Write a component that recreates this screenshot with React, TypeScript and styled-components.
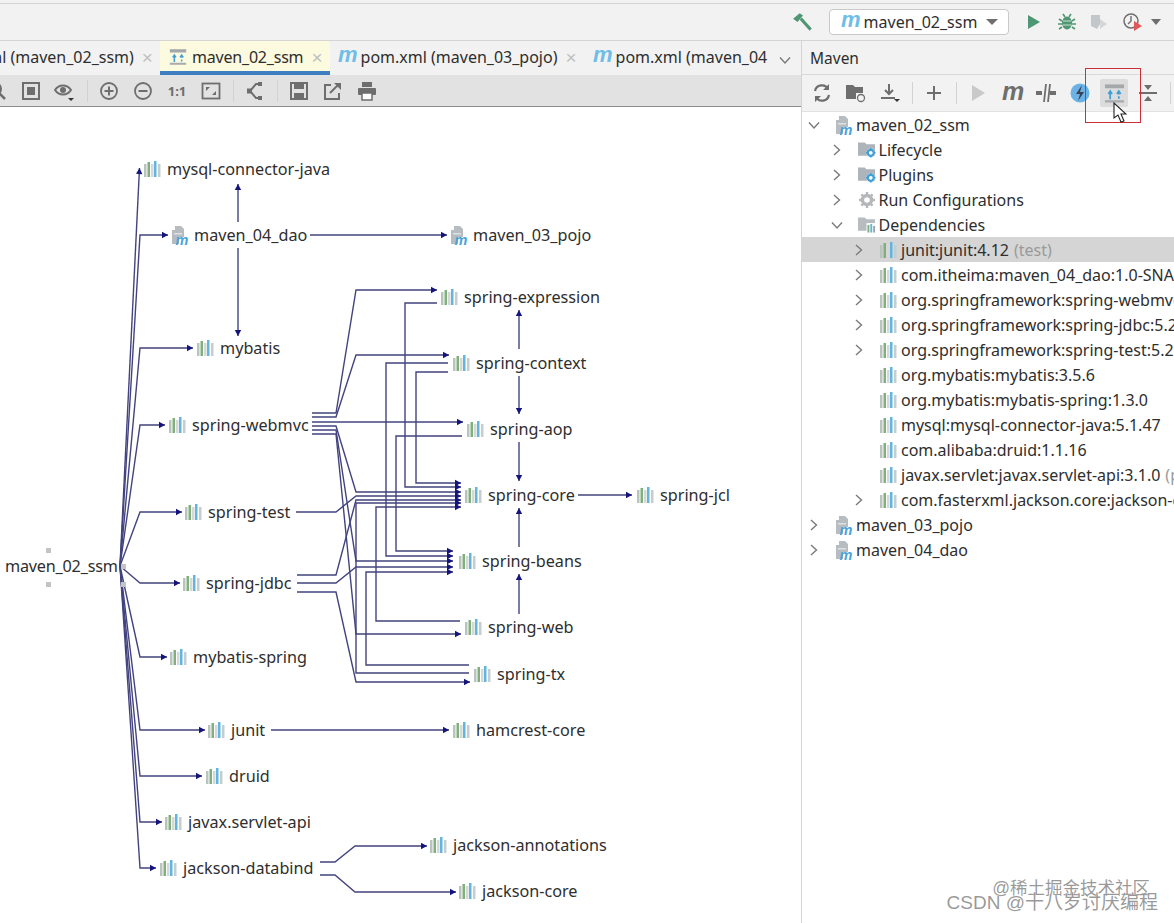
import React, { FunctionComponent } from 'react';
import styled, { createGlobalStyle } from 'styled-components';

const UI_FONT = '"Noto Sans", "Open Sans", "Liberation Sans", sans-serif';
const GRAPH_TOP = 107;

const GlobalStyle = createGlobalStyle`
  html, body { margin: 0; padding: 0; background: #fff; }
  body { font-family: ${UI_FONT}; color: #2e2e2e; }
`;

/* ---------- small drawn icons ---------- */

const Bars: FunctionComponent = () => (
  <svg width="18" height="16" viewBox="0 0 18 16">
    <rect x="0" y="3" width="2.5" height="13" fill="#b9c4bf" />
    <rect x="3.5" y="1" width="2.5" height="15" fill="#7fb07c" />
    <rect x="7" y="3" width="2.5" height="13" fill="#d4d8d6" />
    <rect x="10" y="0" width="2.5" height="16" fill="#62b5e0" />
    <rect x="14" y="3" width="2.5" height="13" fill="#c4cdd0" />
  </svg>
);

const ProjectIcon: FunctionComponent = () => (
  <svg width="18" height="20" viewBox="0 0 18 20">
    <path d="M1 5h3V1h6l3 3v8H8v7H1z" fill="#b7bcc0" />
    <rect x="3" y="8" width="8" height="1.500" fill="#dfe2e4" />
    <text x="4.500" y="19.500" fontFamily="Liberation Sans" fontSize="14.500" fontWeight="700" fontStyle="italic" fill="#4aa3d8">
      m
    </text>
  </svg>
);

const FolderGear: FunctionComponent = () => (
  <svg width="19" height="19" viewBox="0 0 19 19">
    <path d="M0 2h7l2 2h9v12H0z" fill="#aeb4b9" />
    <circle cx="13.5" cy="13" r="4.6" fill="#fff" />
    <circle cx="13.5" cy="13" r="3.2" fill="none" stroke="#3f9fd6" strokeWidth="2.4" />
    <path d="M13.5 8v2M13.5 16v2M8.5 13h2M16.5 13h2" stroke="#3f9fd6" strokeWidth="1.6" />
  </svg>
);

const Gear: FunctionComponent = () => (
  <svg width="18" height="18" viewBox="0 0 18 18">
    <circle cx="9" cy="9" r="4.5" fill="none" stroke="#b4b8bb" strokeWidth="3.4" />
    <path
      d="M9 1v3M9 14v3M1 9h3M14 9h3M3.4 3.4l2 2M12.6 12.6l2 2M14.6 3.4l-2 2M5.400 12.600l-2 2"
      stroke="#b4b8bb"
      strokeWidth="2.4"
    />
  </svg>
);

const FolderBars: FunctionComponent = () => (
  <svg width="19" height="19" viewBox="0 0 19 19">
    <path d="M0 2h7l2 2h9v12H0z" fill="#b7bcc0" />
    <rect x="9" y="8" width="10" height="10" fill="#fff" />
    <rect x="10" y="10" width="2" height="8" fill="#7fb07c" />
    <rect x="13" y="9" width="2" height="9" fill="#62b5e0" />
    <rect x="16" y="11" width="2" height="7" fill="#9aa4a8" />
  </svg>
);

const ChevronRight: FunctionComponent = () => (
  <svg width="14" height="14" viewBox="0 0 14 14">
    <path d="M4 2l5.500 5-5.500 5" fill="none" stroke="#7a7a7a" strokeWidth="1.4" />
  </svg>
);

const ChevronDown: FunctionComponent = () => (
  <svg width="14" height="14" viewBox="0 0 14 14">
    <path d="M2 4.500l5 5.500 5-5.500" fill="none" stroke="#7a7a7a" strokeWidth="1.4" />
  </svg>
);

const Glyph: FunctionComponent<{ children: React.ReactNode; size?: number }> = ({ children, size = 22 }) => (
  <svg width={size} height={size} viewBox="0 0 22 22">
    {children}
  </svg>
);

const GRAY = '#6e6e6e';

const SplitIcon: FunctionComponent<{ size: number }> = ({ size }) => (
  <Glyph size={size}>
    <rect x="1" y="1.500" width="20" height="4" fill="#a4a8ab" />
    <rect x="1" y="18" width="20" height="2.500" fill="#a9adb0" />
    <path d="M6.500 17V9.500M4.500 11.500l2-3 2 3" fill="none" stroke="#3f9fd6" strokeWidth="1.800" />
    <path d="M15.500 12V9.500M13.500 11.500l2-3 2 3M15.500 14v2.500" fill="none" stroke="#3f9fd6" strokeWidth="1.800" />
  </Glyph>
);

/* ---------- page frame ---------- */

const Page = styled.div`
  width: 1174px;
  height: 923px;
  overflow: hidden;
  position: relative;
  display: flex;
  flex-direction: column;
  background: #fff;
`;

const TopEdge = styled.div`
  height: 3px;
  flex: none;
  background: #f2f2f2;
  border-bottom: 1px solid #d4d4d4;
`;

const TopBar = styled.div`
  height: 36px;
  flex: none;
  display: flex;
  align-items: center;
  justify-content: flex-end;
  padding-right: 11px;
  background: #f2f2f2;
  border-bottom: 1px solid #d4d4d4;
`;

const TopSlot = styled.div<{ $w?: number }>`
  width: ${p => p.$w || 33}px;
  height: 26px;
  display: flex;
  align-items: center;
  justify-content: center;
`;

const RunConfig = styled.div`
  width: 180px;
  height: 26px;
  box-sizing: border-box;
  margin: 0 8px 0 10px;
  padding-left: 11px;
  display: flex;
  align-items: center;
  gap: 5px;
  background: #fff;
  border: 1px solid #c9c9c9;
  border-radius: 4px;
  font-size: 16px;
`;

const MavenM = styled.span<{ $color?: string; $size?: number }>`
  font-family: 'Liberation Sans', sans-serif;
  font-style: italic;
  font-weight: 700;
  font-size: ${p => p.$size || 22}px;
  line-height: 1;
  color: ${p => p.$color || '#6fbde8'};
  margin: -4px -2px 0 0;
`;

const ProjectName = styled.span`
  letter-spacing: -0.2px;
`;

const Caret = styled.span`
  width: 0;
  height: 0;
  margin-left: auto;
  margin-right: 10px;
  border-left: 6px solid transparent;
  border-right: 6px solid transparent;
  border-top: 6px solid #6e6e6e;
`;

const Body = styled.div`
  flex: 1;
  min-height: 0;
  display: flex;
`;

const EditorColumn = styled.div`
  width: 801px;
  flex: none;
  display: flex;
  flex-direction: column;
  overflow: hidden;
`;

/* ---------- editor tabs ---------- */

const TabStrip = styled.div`
  height: 34px;
  flex: none;
  display: flex;
  align-items: stretch;
  background: #f2f2f2;
  font-size: 16px;
  white-space: nowrap;
  position: relative;
`;

const Tab = styled.div<{ $active?: boolean; $w: number }>`
  width: ${p => p.$w}px;
  flex: none;
  box-sizing: border-box;
  display: flex;
  align-items: center;
  gap: 5px;
  padding: 2px 0 0 ${p => (p.$active ? 9 : 8)}px;
  background: ${p => (p.$active ? '#fcfadf' : 'transparent')};
  border-bottom: 4px solid ${p => (p.$active ? '#3f7fc1' : 'transparent')};
`;

const ClippedTab = styled(Tab)`
  margin-left: -60px;
  padding-left: 0;
`;

const TabClose = styled.span`
  color: #c0c0c0;
  font-size: 19px;
  font-family: 'Liberation Sans', sans-serif;
  line-height: 1;
  margin-left: 3px;
`;

const TabsMenu = styled.div`
  position: absolute;
  right: 9px;
  top: 9px;
`;

const GraphToolbar = styled.div`
  height: 31px;
  flex: none;
  display: flex;
  align-items: center;
  background: #e2e2e2;
  border-bottom: 1px solid #8c8c8c;
`;

const Slot = styled.div`
  width: 34px;
  height: 28px;
  flex: none;
  display: flex;
  align-items: center;
  justify-content: center;
`;

const FirstSlot = styled(Slot)`
  margin-left: -20px;
`;

const Sep = styled.div`
  width: 10px;
  flex: none;
  height: 22px;
  display: flex;
  justify-content: center;
  &::before {
    content: '';
    width: 1px;
    background: #d2d2d2;
  }
`;

const OneToOne = styled.span`
  font-size: 13px;
  font-weight: 700;
  color: #6e6e6e;
`;

/* ---------- dependency graph ---------- */

const Canvas = styled.div`
  flex: 1;
  position: relative;
  background: #fff;
  overflow: hidden;
`;

const EdgeLayer = styled.svg`
  position: absolute;
  left: 0;
  top: 0;
`;

const GraphNode = styled.div<{ $x: number; $y: number }>`
  position: absolute;
  left: ${p => p.$x}px;
  top: ${p => p.$y - GRAPH_TOP - 12}px;
  height: 24px;
  display: flex;
  align-items: center;
  gap: 5px;
  font-size: 16.2px;
  white-space: nowrap;
`;

const Handle = styled.span<{ $x: number; $y: number }>`
  position: absolute;
  left: ${p => p.$x}px;
  top: ${p => p.$y - GRAPH_TOP}px;
  width: 5px;
  height: 5px;
  background: #c4c4c4;
`;

/* ---------- maven tool window ---------- */

const MavenPanel = styled.div`
  flex: 1;
  min-width: 0;
  border-left: 1px solid #d4d4d4;
  display: flex;
  flex-direction: column;
  overflow: hidden;
`;

const PanelTitle = styled.div`
  height: 33px;
  flex: none;
  display: flex;
  align-items: center;
  padding-left: 8px;
  font-size: 15.5px;
  background: #f2f2f2;
  border-bottom: 1px solid #d9d9d9;
`;

const PanelToolbar = styled.div`
  height: 36px;
  flex: none;
  display: flex;
  align-items: center;
  padding-left: 3px;
  background: #f2f2f2;
  border-bottom: 1px solid #e2e2e2;
`;

const HoverSlot = styled(Slot)`
  &::before {
    content: '';
    position: absolute;
    width: 28px;
    height: 28px;
    background: #dcdcdc;
    border-radius: 2px;
  }
  & > svg {
    position: relative;
  }
`;

const Tree = styled.div`
  flex: 1;
  background: #fff;
`;

const Row = styled.div<{ $level: number; $selected?: boolean }>`
  height: 25px;
  display: flex;
  align-items: center;
  padding-left: ${p => 5 + p.$level * 22.5}px;
  background: ${p => (p.$selected ? '#d5d5d5' : 'transparent')};
  font-size: 16px;
  white-space: nowrap;
`;

const Twist = styled.span`
  width: 14px;
  height: 14px;
  flex: none;
  display: flex;
  margin-right: 14px;
`;

const RowIcon = styled.span`
  width: 18px;
  flex: none;
  margin-right: 3px;
  display: flex;
  align-items: center;
`;

const Muted = styled.span`
  color: #9a9a9a;
  margin-left: 5px;
`;

/* ---------- overlays ---------- */

const RedBox = styled.div`
  position: absolute;
  left: 1085px;
  top: 68px;
  width: 56px;
  height: 55px;
  box-sizing: border-box;
  border: 1px solid #c8303a;
  pointer-events: none;
`;

const Pointer = styled.svg`
  position: absolute;
  left: 1113px;
  top: 102px;
`;

const Watermark = styled.div<{ $top: number; $right: number; $size: number }>`
  position: absolute;
  top: ${p => p.$top}px;
  right: ${p => p.$right}px;
  font-family: 'Liberation Sans', 'Noto Sans CJK SC', sans-serif;
  font-size: ${p => p.$size}px;
  line-height: 1.2;
  color: rgba(120, 120, 120, 0.75);
  text-shadow: 0 0 1px rgba(255, 255, 255, 0.9);
  white-space: nowrap;
`;

/* ---------- data ---------- */

const nodes: [string, number, number][] = [
  ['mysql-connector-java', 144, 169],
  ['maven_04_dao', 171, 235],
  ['maven_03_pojo', 450, 235],
  ['mybatis', 197, 348],
  ['spring-webmvc', 169, 425],
  ['spring-test', 185, 512],
  ['spring-jdbc', 183, 583],
  ['mybatis-spring', 170, 657],
  ['junit', 208, 730],
  ['druid', 206, 776],
  ['javax.servlet-api', 165, 822],
  ['jackson-databind', 160, 868],
  ['jackson-annotations', 430, 845],
  ['jackson-core', 459, 891],
  ['hamcrest-core', 453, 730],
  ['spring-expression', 441, 297],
  ['spring-context', 453, 363],
  ['spring-aop', 467, 429],
  ['spring-core', 465, 495],
  ['spring-jcl', 637, 495],
  ['spring-beans', 459, 561],
  ['spring-web', 465, 627],
  ['spring-tx', 474, 674]
];

type Pt = [number, number];
const root: Pt = [120, 566];

const rootEdge = (y: number, x: number): Pt[] => [root, [140, y], [x, y]];

const edges: Pt[][] = [
  [root, [139.5, 168]],
  rootEdge(235, 168),
  rootEdge(348, 193),
  rootEdge(425, 165),
  rootEdge(512, 182),
  rootEdge(583, 180),
  rootEdge(657, 167),
  rootEdge(730, 205),
  rootEdge(776, 202),
  rootEdge(822, 162),
  rootEdge(868, 156),
  [[238, 222], [238, 184]],
  [[238, 248], [238, 336]],
  [[310, 235], [447, 235]],
  [[271, 730], [449, 730]],
  // spring-webmvc fan out
  [[312, 413], [336, 413], [356, 290], [437, 290]],
  [[312, 417], [336, 417], [356, 355], [449, 355]],
  [[312, 422], [463, 422]],
  [[312, 426], [336, 426], [356, 492], [461, 492]],
  [[312, 430], [336, 430], [356, 561], [453, 561]],
  [[312, 434], [336, 434], [356, 634], [461, 634]],
  // spring-test, spring-jdbc
  [[296, 512], [336, 512], [356, 496], [461, 496]],
  [[297, 575], [336, 575], [356, 500], [461, 500]],
  [[297, 583], [336, 583], [356, 567], [453, 567]],
  [[297, 592], [336, 592], [356, 682], [470, 682]],
  // into spring-core and spring-beans
  [[437, 303], [405, 303], [405, 487], [461, 487]],
  [[448, 372], [416, 372], [416, 483], [461, 483]],
  [[448, 363], [386, 363], [386, 556], [453, 556]],
  [[462, 436], [396, 436], [396, 551], [453, 551]],
  [[460, 621], [376, 621], [376, 507], [461, 507]],
  [[469, 665], [366, 665], [366, 572], [453, 572]],
  [[469, 673], [356, 673], [356, 503], [461, 503]],
  // vertical spring stack
  [[519, 349], [519, 310]],
  [[519, 376], [519, 414]],
  [[519, 442], [519, 481]],
  [[519, 547], [519, 508]],
  [[519, 614], [519, 574]],
  [[578, 495], [632, 495]],
  // jackson
  [[320, 862], [335, 862], [355, 846], [427, 846]],
  [[320, 875], [335, 875], [355, 892], [456, 892]]
];

const arrowHead = (points: Pt[]) => {
  const [ax, ay] = points[points.length - 2];
  const [bx, by] = points[points.length - 1];
  const len = Math.hypot(bx - ax, by - ay) || 1;
  const ux = (bx - ax) / len;
  const uy = (by - ay) / len;
  const l = 6;
  const w = 3.2;
  return [
    `${bx},${by}`,
    `${bx - ux * l - uy * w},${by - uy * l + ux * w}`,
    `${bx - ux * l + uy * w},${by - uy * l - ux * w}`
  ].join(' ');
};

interface TreeItem {
  level: number;
  open?: boolean;
  icon: 'project' | 'lifecycle' | 'gear' | 'deps' | 'bars';
  text: string;
  note?: string;
  selected?: boolean;
  leaf?: boolean;
}

const treeItems: TreeItem[] = [
  { level: 0, open: true, icon: 'project', text: 'maven_02_ssm' },
  { level: 1, icon: 'lifecycle', text: 'Lifecycle' },
  { level: 1, icon: 'lifecycle', text: 'Plugins' },
  { level: 1, icon: 'gear', text: 'Run Configurations' },
  { level: 1, open: true, icon: 'deps', text: 'Dependencies' },
  { level: 2, icon: 'bars', text: 'junit:junit:4.12', note: '(test)', selected: true },
  { level: 2, icon: 'bars', text: 'com.itheima:maven_04_dao:1.0-SNAPSHOT' },
  { level: 2, icon: 'bars', text: 'org.springframework:spring-webmvc:5.2.10.RELEASE' },
  { level: 2, icon: 'bars', text: 'org.springframework:spring-jdbc:5.2.10.RELEASE' },
  { level: 2, icon: 'bars', text: 'org.springframework:spring-test:5.2.10.RELEASE' },
  { level: 2, leaf: true, icon: 'bars', text: 'org.mybatis:mybatis:3.5.6' },
  { level: 2, leaf: true, icon: 'bars', text: 'org.mybatis:mybatis-spring:1.3.0' },
  { level: 2, leaf: true, icon: 'bars', text: 'mysql:mysql-connector-java:5.1.47' },
  { level: 2, leaf: true, icon: 'bars', text: 'com.alibaba:druid:1.1.16' },
  { level: 2, leaf: true, icon: 'bars', text: 'javax.servlet:javax.servlet-api:3.1.0', note: '(provided)' },
  { level: 2, icon: 'bars', text: 'com.fasterxml.jackson.core:jackson-databind:2.9.0' },
  { level: 0, icon: 'project', text: 'maven_03_pojo' },
  { level: 0, icon: 'project', text: 'maven_04_dao' }
];

const treeIcons = {
  project: <ProjectIcon />,
  lifecycle: <FolderGear />,
  gear: <Gear />,
  deps: <FolderBars />,
  bars: <Bars />
};

const App: FunctionComponent = () => (
  <Page>
    <GlobalStyle />
    <TopEdge />
    <TopBar>
      <TopSlot>
        <svg width="22" height="22" viewBox="0 0 20 20">
          <path d="M1 7l6-5 3 2-5 6z" fill="#4f9673" />
          <path d="M7 8l2-2 9 10-2 2z" fill="#4f9673" />
        </svg>
      </TopSlot>
      <RunConfig>
        <MavenM>m</MavenM>
        <span>maven_02_ssm</span>
        <Caret />
      </RunConfig>
      <TopSlot>
        <svg width="14" height="16" viewBox="0 0 14 16">
          <path d="M1 1l12 7-12 7z" fill="#4f9673" />
        </svg>
      </TopSlot>
      <TopSlot>
        <svg width="18" height="18" viewBox="0 0 18 18">
          <ellipse cx="9" cy="10" rx="5" ry="6.500" fill="#4f9673" />
          <path d="M1 6l3 2M17 6l-3 2M0 11h4M18 11h-4M1 16l3-2M17 16l-3-2M5 1l2 3M13 1l-2 3" stroke="#4f9673" strokeWidth="1.6" />
          <path d="M5 8h8M5 12h8" stroke="#cfe0d4" strokeWidth="1" />
        </svg>
      </TopSlot>
      <TopSlot>
        <svg width="19" height="18" viewBox="0 0 19 18">
          <path d="M1 2h9v9l-3 5-6-3z" fill="#c3c7ca" />
          <path d="M10 6l7 5-7 5z" fill="#d4d7d9" />
        </svg>
      </TopSlot>
      <TopSlot>
        <svg width="20" height="20" viewBox="0 0 20 20">
          <circle cx="8" cy="9" r="7" fill="none" stroke="#6e6e6e" strokeWidth="1.500" />
          <path d="M8 4v5l-3 3" fill="none" stroke="#6e6e6e" strokeWidth="1.400" />
          <path d="M11 9l8 5-8 5z" fill="#e0575b" />
        </svg>
      </TopSlot>
      <TopSlot $w={14}>
        <svg width="12" height="8" viewBox="0 0 12 8">
          <path d="M1 1h10L6 7z" fill="#6e6e6e" />
        </svg>
      </TopSlot>
    </TopBar>
    <Body>
      <EditorColumn>
        <TabStrip>
          <ClippedTab $w={220}>
            <span>pom.xml (maven_02_ssm)</span>
            <TabClose>×</TabClose>
          </ClippedTab>
          <Tab $active $w={170}>
            <SplitIcon size={18} />
            <ProjectName>maven_02_ssm</ProjectName>
            <TabClose>×</TabClose>
          </Tab>
          <Tab $w={255}>
            <MavenM>m</MavenM>
            <span>pom.xml (maven_03_pojo)</span>
            <TabClose>×</TabClose>
          </Tab>
          <Tab $w={190}>
            <MavenM>m</MavenM>
            <span>pom.xml (maven_04</span>
          </Tab>
          <TabsMenu>
            <ChevronDown />
          </TabsMenu>
        </TabStrip>
        <GraphToolbar>
          <FirstSlot>
            <Glyph>
              <circle cx="9" cy="9" r="6" fill="none" stroke={GRAY} strokeWidth="2" />
              <path d="M13 13l6 6" stroke={GRAY} strokeWidth="2.500" />
            </Glyph>
          </FirstSlot>
          <Slot>
            <Glyph>
              <rect x="3" y="3" width="16" height="16" fill="none" stroke={GRAY} strokeWidth="2" />
              <rect x="7" y="7" width="8" height="8" fill={GRAY} />
            </Glyph>
          </Slot>
          <Slot>
            <Glyph>
              <path d="M1 10c4-6 12-6 16 0-4 6-12 6-16 0z" fill="none" stroke={GRAY} strokeWidth="2" />
              <circle cx="9" cy="10" r="3" fill={GRAY} />
              <path d="M14 18h6l-3 3z" fill="#333" />
            </Glyph>
          </Slot>
          <Sep />
          <Slot>
            <Glyph>
              <circle cx="11" cy="11" r="8" fill="none" stroke={GRAY} strokeWidth="1.800" />
              <path d="M6.500 11h9M11 6.500v9" stroke={GRAY} strokeWidth="2" />
            </Glyph>
          </Slot>
          <Slot>
            <Glyph>
              <circle cx="11" cy="11" r="8" fill="none" stroke={GRAY} strokeWidth="1.800" />
              <path d="M6.500 11h9" stroke={GRAY} strokeWidth="2" />
            </Glyph>
          </Slot>
          <Slot>
            <OneToOne>1:1</OneToOne>
          </Slot>
          <Slot>
            <Glyph>
              <rect x="2.500" y="3.500" width="17" height="15" fill="none" stroke={GRAY} strokeWidth="1.800" />
              <path d="M6 7h4l-4 4zM16 15h-4l4-4z" fill={GRAY} />
            </Glyph>
          </Slot>
          <Sep />
          <Slot>
            <Glyph>
              <path d="M17 4h-5l-6 7 6 7h5" fill="none" stroke={GRAY} strokeWidth="2" />
              <rect x="3" y="8.500" width="5" height="5" fill={GRAY} />
              <rect x="14" y="2" width="4" height="4" fill={GRAY} />
              <rect x="14" y="16" width="4" height="4" fill={GRAY} />
            </Glyph>
          </Slot>
          <Sep />
          <Slot>
            <Glyph>
              <path d="M3 3h16v16H3z" fill="none" stroke={GRAY} strokeWidth="2" />
              <rect x="6" y="3" width="10" height="6" fill={GRAY} />
              <rect x="6" y="13" width="10" height="6" fill={GRAY} />
            </Glyph>
          </Slot>
          <Slot>
            <Glyph>
              <path d="M9 5H3v14h14v-6" fill="none" stroke={GRAY} strokeWidth="2" />
              <path d="M8 13l9-9" stroke={GRAY} strokeWidth="2" />
              <path d="M12 3h7v7z" fill={GRAY} />
            </Glyph>
          </Slot>
          <Slot>
            <Glyph>
              <rect x="6" y="2" width="10" height="5" fill={GRAY} />
              <rect x="2" y="8" width="18" height="7" rx="1" fill={GRAY} />
              <rect x="6" y="13" width="10" height="7" fill="#fff" stroke={GRAY} strokeWidth="1.500" />
            </Glyph>
          </Slot>
        </GraphToolbar>
        <Canvas>
          <EdgeLayer width="801" height="816" viewBox={`0 ${GRAPH_TOP} 801 816`}>
            {edges.map((points, i) => (
              <g key={i}>
                <polyline
                  points={points.map(p => p.join(',')).join(' ')}
                  fill="none"
                  stroke="#43437f"
                  strokeWidth="1.400"
                />
                <polygon points={arrowHead(points)} fill="#14147c" />
              </g>
            ))}
          </EdgeLayer>
          <GraphNode $x={5} $y={566}>
            <ProjectName>maven_02_ssm</ProjectName>
          </GraphNode>
          <Handle $x={46} $y={548} />
          <Handle $x={46} $y={582} />
          <Handle $x={121} $y={564} />
          <Handle $x={121} $y={582} />
          {nodes.map(([name, x, y]) => (
            <GraphNode key={name} $x={x} $y={y}>
              {name === 'maven_04_dao' || name === 'maven_03_pojo' ? <ProjectIcon /> : <Bars />}
              <span>{name}</span>
            </GraphNode>
          ))}
        </Canvas>
      </EditorColumn>
      <MavenPanel>
        <PanelTitle>Maven</PanelTitle>
        <PanelToolbar>
          <Slot>
            <Glyph>
              <path d="M4 9a7 7 0 0 1 13-2M18 13a7 7 0 0 1-13 2" fill="none" stroke={GRAY} strokeWidth="2.200" />
              <path d="M18 2v6h-6zM4 20v-6h6z" fill={GRAY} />
            </Glyph>
          </Slot>
          <Slot>
            <Glyph>
              <path d="M1 3h7l2 2h8v6h-7v6H1z" fill={GRAY} />
              <circle cx="16" cy="16" r="3.500" fill="none" stroke={GRAY} strokeWidth="1.300" />
            </Glyph>
          </Slot>
          <Slot>
            <Glyph>
              <path d="M10 2v9M6 8l4 4 4-4M2 16h14" fill="none" stroke={GRAY} strokeWidth="2" />
              <path d="M15 17h6l-3 3z" fill="#333" />
            </Glyph>
          </Slot>
          <Sep />
          <Slot>
            <Glyph>
              <path d="M11 4v14M4 11h14" stroke={GRAY} strokeWidth="2" />
            </Glyph>
          </Slot>
          <Sep />
          <Slot>
            <Glyph>
              <path d="M5 3l13 8-13 8z" fill="#c9c9c9" />
            </Glyph>
          </Slot>
          <Slot>
            <MavenM $color={GRAY} $size={25}>
              m
            </MavenM>
          </Slot>
          <Slot>
            <Glyph>
              <path d="M1 11h6M15 11h6" stroke={GRAY} strokeWidth="4" />
              <path d="M9 20L11 2M13 20L15 2" stroke={GRAY} strokeWidth="1.800" />
            </Glyph>
          </Slot>
          <Slot>
            <Glyph>
              <circle cx="11" cy="11" r="9.500" fill="#6bb3e6" />
              <path d="M13 3L7 12h4l-2 7 6-9h-4z" fill="#3d3f52" />
            </Glyph>
          </Slot>
          <HoverSlot>
            <SplitIcon size={21} />
          </HoverSlot>
          <Slot>
            <Glyph>
              <path d="M2 11h18" stroke={GRAY} strokeWidth="2" />
              <path d="M7 3l4 5 4-5zM7 19l4-5 4 5z" fill={GRAY} />
            </Glyph>
          </Slot>
          <Sep />
        </PanelToolbar>
        <Tree>
          {treeItems.map(item => (
            <Row key={item.text} $level={item.level} $selected={item.selected}>
              <Twist>{item.leaf ? null : item.open ? <ChevronDown /> : <ChevronRight />}</Twist>
              <RowIcon>{treeIcons[item.icon]}</RowIcon>
              <span>{item.text}</span>
              {item.note && <Muted>{item.note}</Muted>}
            </Row>
          ))}
        </Tree>
      </MavenPanel>
    </Body>
    <RedBox />
    <Pointer width="14" height="21" viewBox="0 0 14 21">
      <path d="M1 1v15l4-3 3 7 3-1-3-7h5z" fill="#fff" stroke="#222" strokeWidth="1.100" />
    </Pointer>
    <Watermark $top={878} $right={24} $size={17.5}>
      @稀土掘金技术社区
    </Watermark>
    <Watermark $top={892} $right={16} $size={19}>
      CSDN @十八岁讨厌编程
    </Watermark>
  </Page>
);

export default App;
